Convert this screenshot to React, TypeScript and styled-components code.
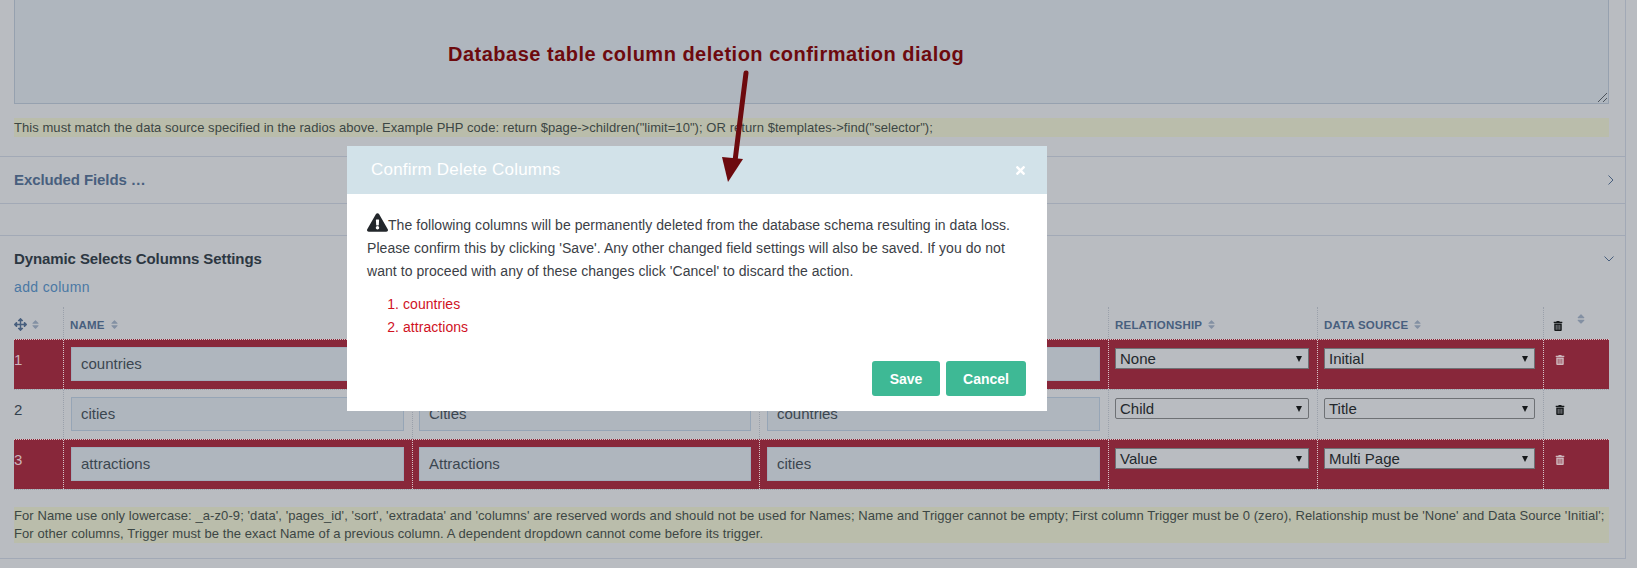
import React from "react";
import styled, { createGlobalStyle } from "styled-components";
import { FaArrowsAlt, FaExclamationTriangle, FaSort, FaTimes, FaTrashAlt } from "react-icons/fa";

const GlobalStyle = createGlobalStyle`
  html, body {
    margin: 0;
    padding: 0;
    background: #b9bcc1;
    overflow: hidden;
  }
  body {
    font-family: "Liberation Sans", Arial, sans-serif;
    font-size: 13px;
    color: #2c3742;
  }
`;

const Page = styled.div`
  position: relative;
  width: 1637px;
  height: 568px;
  overflow: hidden;
`;

const Panel = styled.div`
  width: 1626px;
  height: 559px;
  border-right: 1px solid #a2a9b6;
  border-bottom: 1px solid #a2a9b6;
  box-sizing: border-box;
`;

const Section = styled.section<{ $height: number }>`
  height: ${(p) => p.$height}px;
  border-bottom: 1px solid #a2a9b6;
  padding: 0 16px 0 14px;
`;

const ColumnsSection = styled.section`
  padding: 13px 16px 0 14px;
`;

const FakeTextarea = styled.div`
  position: relative;
  height: 104px;
  box-sizing: border-box;
  background: #afb6be;
  border: 1px solid #96a1af;
  border-top: 0;
`;

const Grip = styled.svg`
  position: absolute;
  right: 0;
  bottom: 0;
`;

const Note = styled.p<{ $top: number; $lh: number; $ls: number }>`
  margin: ${(p) => p.$top}px 0 0;
  background: #babdab;
  color: #3c4644;
  font-size: 13px;
  line-height: ${(p) => p.$lh}px;
  letter-spacing: ${(p) => p.$ls}px;
`;

const SectionHead = styled.div`
  display: flex;
  align-items: center;
  justify-content: space-between;
`;

const FoldTitle = styled.h3`
  margin: 0;
  font-size: 15px;
  font-weight: 700;
  line-height: 46px;
  letter-spacing: -0.1px;
  color: #485f7e;
`;

const ColumnsTitle = styled.h3`
  margin: 0;
  font-size: 15px;
  font-weight: 700;
  line-height: 20px;
  letter-spacing: -0.1px;
  color: #2c3742;
`;

const Chevron = styled.svg`
  display: block;
  margin-right: -6px;
`;

const AddLink = styled.a`
  display: block;
  margin-top: 8px;
  font-size: 14px;
  line-height: 20px;
  letter-spacing: 0.35px;
  color: #4a78a4;
`;

const Table = styled.div`
  margin-top: 10px;
`;

const Cols = "50px 349px 347px 349px 209px 226px 65px";

const HeadRow = styled.div`
  display: grid;
  grid-template-columns: ${Cols};
  height: 32px;
`;

const HeadCell = styled.div`
  display: flex;
  align-items: center;
  gap: 4px;
  padding: 3px 0 0 6px;
  box-sizing: border-box;
  border-right: 1px dotted #9aa0aa;
  font-size: 11.5px;
  font-weight: 700;
  color: #485f7e;
  letter-spacing: 0.2px;
  &:first-child {
    padding-left: 0;
    gap: 3px;
  }
  &:last-child {
    border-right: 0;
    padding-left: 9px;
  }
`;

const SortIcon = styled(FaSort)`
  font-size: 11px;
  color: #8390a3;
`;

const RaisedSort = styled(FaSort)`
  font-size: 12px;
  color: #8390a3;
  margin: -12px 0 0 8px;
`;

const DataRow = styled.div<{ $del?: boolean }>`
  display: grid;
  grid-template-columns: ${Cols};
  height: 50px;
  box-sizing: border-box;
  background: ${(p) => (p.$del ? "#88273a" : "transparent")};
  border-top: 1px dotted ${(p) => (p.$del ? "#d8c4c8" : "#9aa0aa")};
  color: ${(p) => (p.$del ? "#c9b3b9" : "#33404d")};
`;

const TableEnd = styled.div`
  height: 1px;
  border-top: 1px dotted #9aa0aa;
`;

const Cell = styled.div<{ $del?: boolean; $pad?: number }>`
  box-sizing: border-box;
  padding: 7px 0 0 ${(p) => p.$pad ?? 7}px;
  border-right: 1px dotted ${(p) => (p.$del ? "#d8c4c8" : "#9aa0aa")};
  &:last-child {
    border-right: 0;
  }
`;

const NumberCell = styled(Cell)`
  padding: 10px 0 0 0;
  font-size: 15px;
  line-height: 20px;
`;

const TextBox = styled.div<{ $del?: boolean }>`
  height: 34px;
  box-sizing: border-box;
  margin-right: 8px;
  padding-left: 9px;
  background: #afb6be;
  border: 1px solid ${(p) => (p.$del ? "#a3adbb" : "#96a5b6")};
  font-size: 15px;
  line-height: 32px;
  color: #3b4650;
`;

const Select = styled.div<{ $del?: boolean }>`
  display: flex;
  align-items: center;
  justify-content: space-between;
  height: 21px;
  box-sizing: border-box;
  margin: 1px 8px 0 0;
  padding: 0 6px 0 4px;
  background: #b9bcc1;
  border: 1px solid #6e7175;
  border-radius: ${(p) => (p.$del ? "0" : "2px")};
  font-size: 15px;
  color: #23282c;
`;

const SelectArrow = styled.span`
  width: 0;
  height: 0;
  border-left: 3.5px solid transparent;
  border-right: 3.5px solid transparent;
  border-top: 6px solid #16191b;
`;

const TrashCell = styled(Cell)`
  padding: 15px 0 0 11px;
`;

const Trash = styled(FaTrashAlt)<{ $del?: boolean }>`
  display: block;
  font-size: 10px;
  color: ${(p) => (p.$del ? "#cdb8bd" : "#15181a")};
`;

const HeadTrash = styled(FaTrashAlt)`
  font-size: 10px;
  color: #15181a;
  margin-top: 3px;
`;

const MoveIcon = styled(FaArrowsAlt)`
  font-size: 13px;
  color: #485f7e;
`;

const Dialog = styled.div`
  position: absolute;
  left: 347px;
  top: 146px;
  width: 700px;
  height: 265px;
  background: #fff;
`;

const DialogHead = styled.div`
  display: flex;
  align-items: center;
  justify-content: space-between;
  height: 48px;
  padding: 0 20px 0 24px;
  background: #d2e2e9;
  color: #fff;
  font-size: 17px;
  letter-spacing: 0.2px;
`;

const CloseIcon = styled(FaTimes)`
  font-size: 13px;
`;

const DialogBody = styled.div`
  padding: 18px 20px 0;
  font-size: 14px;
  line-height: 23px;
  letter-spacing: 0.05px;
  color: #3b4046;
`;

const Warn = styled(FaExclamationTriangle)`
  font-size: 21px;
  color: #23272b;
  vertical-align: -3px;
`;

const DeleteList = styled.ol`
  margin: 10px 0 0;
  padding: 0 0 0 36px;
  color: #d0121f;
`;

const DialogFoot = styled.div`
  display: flex;
  justify-content: flex-end;
  gap: 6px;
  margin: 22px 1px 0 0;
`;

const Btn = styled.button<{ $w: number }>`
  height: 35px;
  padding: 0;
  width: ${(p) => p.$w}px;
  border: 0;
  border-radius: 3px;
  background: #3eb995;
  color: #fff;
  font-family: inherit;
  font-size: 14px;
  font-weight: 700;
`;

const Annotation = styled.div`
  position: absolute;
  left: 448px;
  top: 43px;
  font-size: 20px;
  font-weight: 700;
  line-height: 22px;
  color: #6d0a0e;
  white-space: nowrap;
  letter-spacing: 0.5px;
`;

const ArrowSvg = styled.svg`
  position: absolute;
  left: 710px;
  top: 65px;
`;

const columns = [
  { id: 1, name: "countries", label: "", trigger: "", rel: "None", src: "Initial", del: true },
  { id: 2, name: "cities", label: "Cities", trigger: "countries", rel: "Child", src: "Title", del: false },
  { id: 3, name: "attractions", label: "Attractions", trigger: "cities", rel: "Value", src: "Multi Page", del: true },
];

// label and trigger headings sit behind the dialog
const heads = ["NAME", "", "", "RELATIONSHIP", "DATA SOURCE"];

export default function App() {
  return (
    <Page>
      <GlobalStyle />
      <Panel>
        <Section $height={156}>
          <FakeTextarea>
            <Grip width="12" height="12" viewBox="0 0 12 12">
              <path d="M2 11 L11 2 M7 11 L11 7" stroke="#4d545c" strokeWidth="1" fill="none" />
            </Grip>
          </FakeTextarea>
          <Note $top={14} $lh={19} $ls={0.06}>
            This must match the data source specified in the radios above. Example PHP code: return $page-&gt;children("limit=10"); OR return $templates-&gt;find("selector");
          </Note>
        </Section>
        <Section $height={46}>
          <SectionHead>
            <FoldTitle>Excluded Fields …</FoldTitle>
            <Chevron width="8" height="12" viewBox="0 0 8 12">
              <path d="M1.5 1.5 L6 6 L1.5 10.5" stroke="#485f7e" strokeWidth="1" fill="none" />
            </Chevron>
          </SectionHead>
        </Section>
        <Section $height={31} />
        <ColumnsSection>
          <SectionHead>
            <ColumnsTitle>Dynamic Selects Columns Settings</ColumnsTitle>
            <Chevron width="12" height="8" viewBox="0 0 12 8">
              <path d="M1.5 1.5 L6 6 L10.5 1.5" stroke="#485f7e" strokeWidth="1" fill="none" />
            </Chevron>
          </SectionHead>
          <AddLink>add column</AddLink>
          <Table>
            <HeadRow>
              <HeadCell>
                <MoveIcon />
                <SortIcon />
              </HeadCell>
              {heads.map((h, i) => (
                <HeadCell key={i}>
                  {h}
                  <SortIcon />
                </HeadCell>
              ))}
              <HeadCell>
                <HeadTrash />
                <RaisedSort />
              </HeadCell>
            </HeadRow>
            {columns.map((c) => (
              <DataRow key={c.id} $del={c.del}>
                <NumberCell $del={c.del}>{c.id}</NumberCell>
                <Cell $del={c.del}>
                  <TextBox $del={c.del}>{c.name}</TextBox>
                </Cell>
                <Cell $del={c.del} $pad={6}>
                  <TextBox $del={c.del}>{c.label}</TextBox>
                </Cell>
                <Cell $del={c.del}>
                  <TextBox $del={c.del}>{c.trigger}</TextBox>
                </Cell>
                <Cell $del={c.del} $pad={6}>
                  <Select $del={c.del}>
                    {c.rel}
                    <SelectArrow />
                  </Select>
                </Cell>
                <Cell $del={c.del} $pad={6}>
                  <Select $del={c.del}>
                    {c.src}
                    <SelectArrow />
                  </Select>
                </Cell>
                <TrashCell $del={c.del}>
                  <Trash $del={c.del} />
                </TrashCell>
              </DataRow>
            ))}
            <TableEnd />
          </Table>
          <Note $top={16} $lh={18} $ls={0.08}>
            For Name use only lowercase: _a-z0-9; 'data', 'pages_id', 'sort', 'extradata' and 'columns' are reserved words and should not be used for Names; Name and Trigger cannot be empty; First column Trigger must be 0 (zero), Relationship must be 'None' and Data Source 'Initial';
            <br />
            For other columns, Trigger must be the exact Name of a previous column. A dependent dropdown cannot come before its trigger.
          </Note>
        </ColumnsSection>
      </Panel>

      <Dialog>
        <DialogHead>
          Confirm Delete Columns
          <CloseIcon />
        </DialogHead>
        <DialogBody>
          <Warn />
          The following columns will be permanently deleted from the database schema resulting in data loss. Please confirm this by clicking 'Save'. Any other changed field settings will also be saved. If you do not want to proceed with any of these changes click 'Cancel' to discard the action.
          <DeleteList>
            <li>countries</li>
            <li>attractions</li>
          </DeleteList>
          <DialogFoot>
            <Btn $w={68}>Save</Btn>
            <Btn $w={80}>Cancel</Btn>
          </DialogFoot>
        </DialogBody>
      </Dialog>

      <Annotation>Database table column deletion confirmation dialog</Annotation>
      <ArrowSvg width="50" height="125" viewBox="0 0 50 125">
        <path d="M36 8 L25 96" stroke="#6d0a0e" strokeWidth="5" strokeLinecap="round" fill="none" />
        <path d="M12 92 L33 94 L18 117 Z" fill="#6d0a0e" />
      </ArrowSvg>
    </Page>
  );
}
